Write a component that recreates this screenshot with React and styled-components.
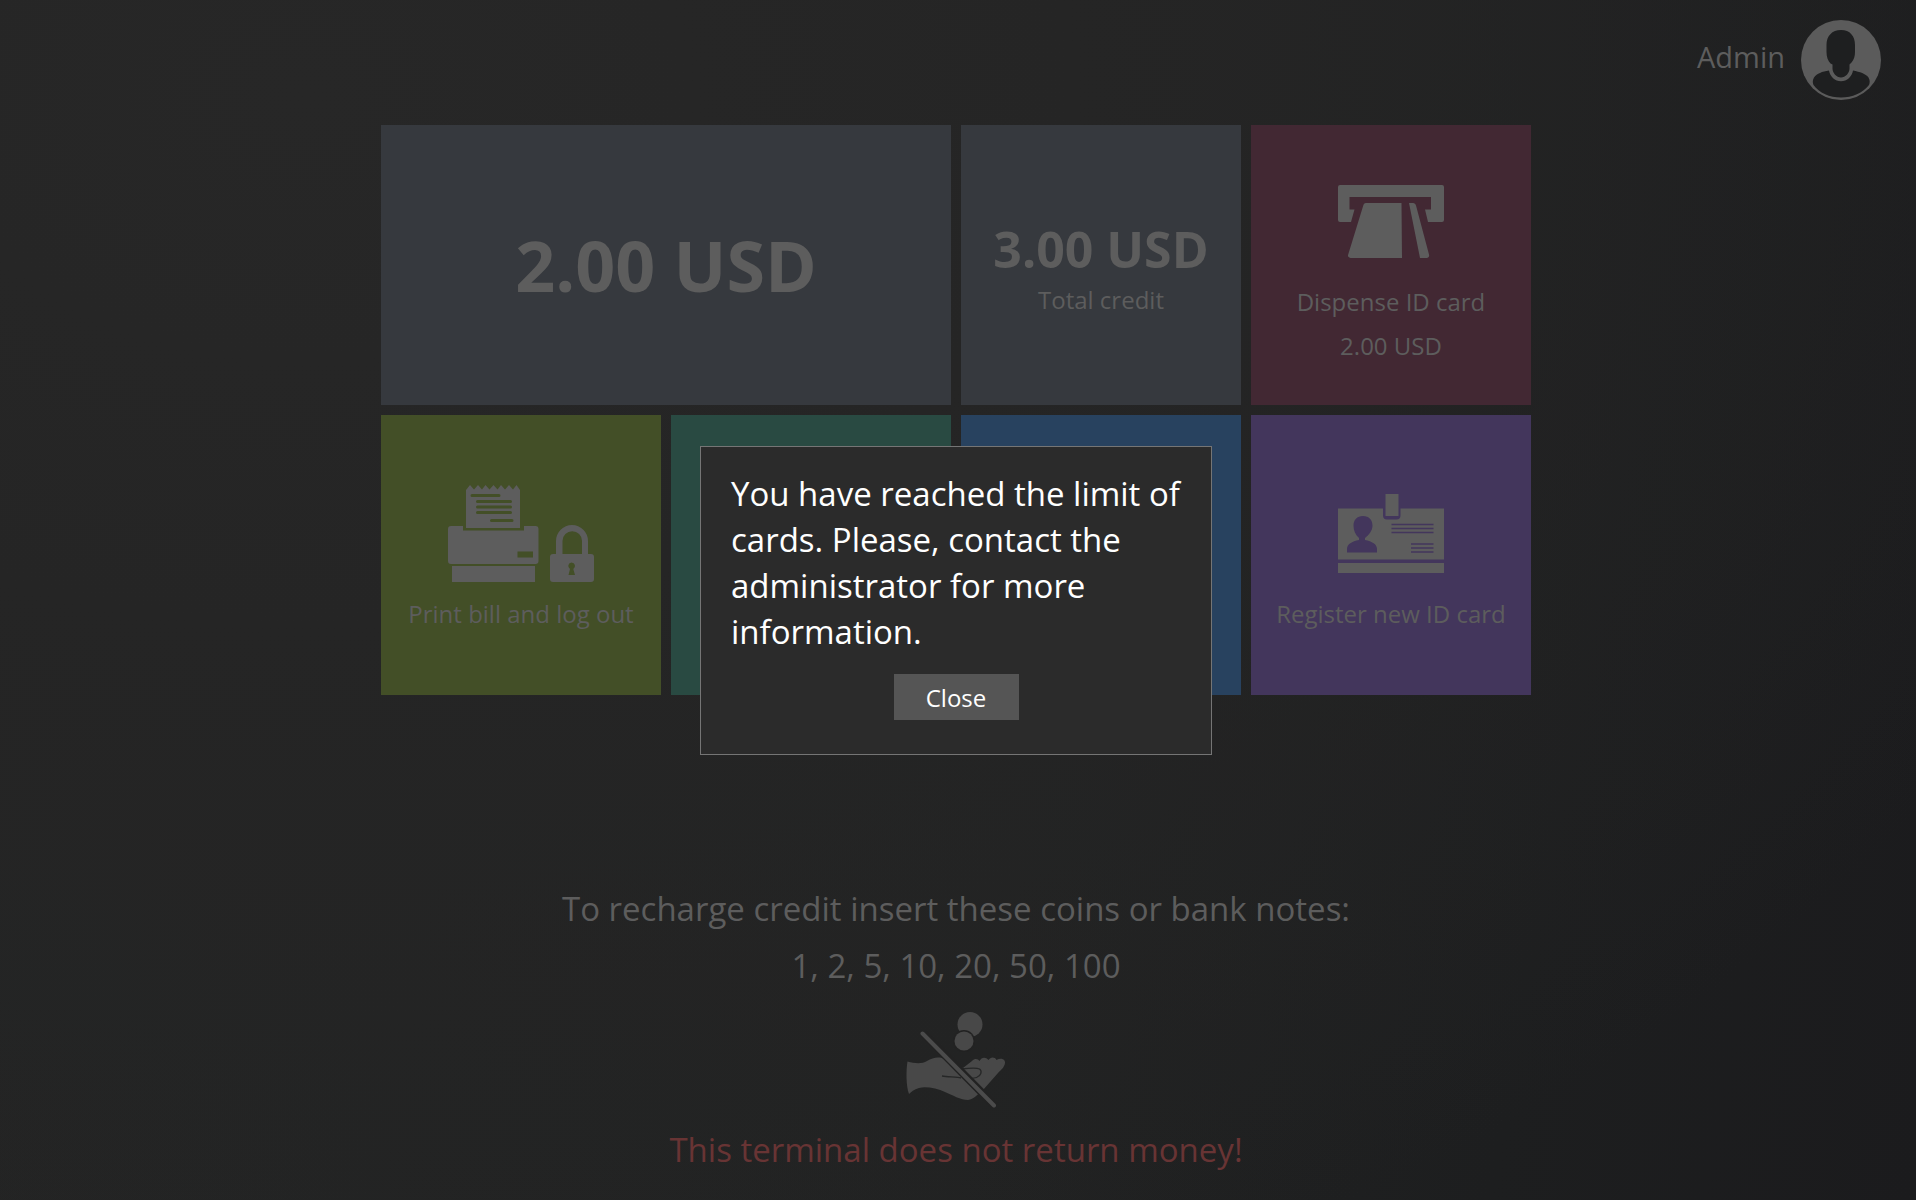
import React from "react";
import styled, { createGlobalStyle } from "styled-components";

const Global = createGlobalStyle`
  *, *::before, *::after { box-sizing: border-box; }
  html, body, #root { height: 100%; }
  body {
    margin: 0;
    background: #222222;
    color: #5d5d5d;
    font-family: "Segoe UI", "Open Sans", "Noto Sans", sans-serif;
  }
  button { font: inherit; color: inherit; border: 0; }
  h1, p { margin: 0; font-weight: 400; }
  svg { display: block; }
`;

const Page = styled.div`
  min-height: 100vh;
  padding-right: 4px;
  display: flex;
  flex-direction: column;
  align-items: center;
  background:
    radial-gradient(ellipse 100% 110% at 16% 8%, #272727 0%, #252525 40%, rgba(34, 34, 34, 0) 100%),
    linear-gradient(100deg, #232424 0%, #212222 55%, #1d1e1f 80%, #1b1b1d 100%);
`;

const Header = styled.header`
  align-self: stretch;
  display: flex;
  justify-content: flex-end;
  align-items: center;
  height: 125px;
  padding: 20px 31px 25px;
`;

const UserButton = styled.button`
  display: flex;
  align-items: center;
  gap: 16px;
  padding: 0;
  background: none;
  font-size: 29px;
  line-height: 40px;
`;

const UserName = styled.span`
  padding-bottom: 6px;
`;

const Tiles = styled.main`
  display: grid;
  grid-template-columns: repeat(4, 280px);
  grid-auto-rows: 280px;
  gap: 10px;
`;

const Tile = styled.section`
  grid-column: span ${(p) => p.$span || 1};
  display: flex;
  flex-direction: column;
  align-items: center;
  justify-content: center;
  background: ${(p) => p.$color};
`;

const TileButton = styled(Tile).attrs({ as: "button", type: "button" })`
  justify-content: flex-start;
  padding: ${(p) => p.$top || 60}px 0 0;
  font-size: 24px;
  line-height: 32px;
`;

const Label = styled.span`
  margin-top: ${(p) => p.$gap || 0}px;
  white-space: nowrap;
`;

const Amount = styled.strong`
  font-size: ${(p) => p.$size}px;
  line-height: ${(p) => p.$line}px;
  font-weight: 700;
`;

const Caption = styled.span`
  font-size: 24px;
  line-height: 32px;
`;

const Notice = styled.footer`
  display: flex;
  flex-direction: column;
  align-items: center;
  padding-top: 185px;
  font-size: 33px;
  line-height: 57px;
  text-align: center;
`;

const HandSlot = styled.div`
  padding: 18px 0 13px;
`;

const Warning = styled.p`
  color: #683434;
`;

const Overlay = styled.div`
  position: fixed;
  inset: 0;
  padding-right: 4px;
  display: flex;
  align-items: center;
  justify-content: center;
`;

const Dialog = styled.div`
  width: 512px;
  padding: 24px 30px 34px;
  display: flex;
  flex-direction: column;
  align-items: center;
  gap: 19px;
  border: 1px solid #757575;
  background: #2b2b2b;
  color: #ffffff;
`;

const Message = styled.p`
  align-self: stretch;
  font-size: 33px;
  line-height: 46px;
`;

const CloseButton = styled.button`
  width: 125px;
  height: 46px;
  padding: 2px 0 0;
  background: #555555;
  font-size: 24px;
  line-height: 32px;
`;

const Avatar = () => (
  <svg width="80" height="80" viewBox="0 0 80 80" aria-hidden="true">
    <circle cx="40" cy="40" r="40" fill="#5b5b5b" />
    <path
      fill="#1e1f20"
      d="M40 10c-9 0-14.500 6-14.500 15v7c0 5 1.500 9 4 11.500l2 1v4c0 4.500 4 9 8.500 9s8.500-4.500 8.500-9v-4l2-2c2.500-3 3.500-6.500 3.500-10.500v-7C54 16 49 10 40 10z"
    />
    <path
      fill="#1e1f20"
      d="M28 50.500c1 6 6 10.800 12 10.800s11-4.800 12-10.800c7 1.500 12.500 3 15.500 7 1.500 2.500 1.500 5 .5 7.500C62 73 51 77.500 40 77.500S18 73 12.500 65c-1-2.500-1-5 .5-7.500 3-4 8-6 15-7z"
    />
  </svg>
);

const DispenseIcon = () => (
  <svg width="106" height="74" viewBox="0 0 106 74" fill="#5d5d5d" aria-hidden="true">
    <path d="M2 0h102a2 2 0 0 1 2 2v33a2 2 0 0 1-2 2H90L87 24.500h6V12H11.500v12.500h5L13 37H2a2 2 0 0 1-2-2V2a2 2 0 0 1 2-2z" />
    <path d="M28 18h35.500l.5 55H12.500a2.500 2.500 0 0 1-2.300-3.500L25.500 19.800A2.500 2.500 0 0 1 28 18z" />
    <path d="M71 18h4c1.500 0 2.500 1 3 2.500L91 69.500c.6 2-.5 3.500-2.500 3.500H82z" />
  </svg>
);

const PrintIcon = () => (
  <svg width="146" height="97" viewBox="0 0 146 97" fill="#5d5d5d" aria-hidden="true">
    <path d="M18 43V5l4-5 4 4.500L30 0l4 4.500L37.500 0l4 4.500L45.500 0l4 4.500L53 0l4 4.500L61 0l4 4.500L68.500 0 72 5v38z" />
    <path d="M3 41h12v4.500h61V41h11.500a3 3 0 0 1 3 3v32a3 3 0 0 1-3 3H3a3 3 0 0 1-3-3V44a3 3 0 0 1 3-3z" />
    <path d="M4 81h83v16H4z" />
    <path
      stroke="#434f27"
      strokeWidth="3"
      strokeLinecap="round"
      d="M24 10.500h27M29.500 16.500h33M29.500 22h33M29.500 27.500h33M43.500 35.500h20.500"
    />
    <path fill="#434f27" d="M69.500 66.500h15.500v6H69.500z" />
    <path d="M108 69V56a16 16 0 0 1 32 0v13h3a3 3 0 0 1 3 3v22a3 3 0 0 1-3 3h-38a3 3 0 0 1-3-3V72a3 3 0 0 1 3-3zm6.500 0h19.500V56a9.700 9.700 0 0 0-19.500 0z" />
    <path fill="#434f27" d="M123.500 77.500a3.500 3.500 0 0 1 1.800 6.500l1.700 6h-6.500l1.500-6a3.500 3.500 0 0 1 1.500-6.500z" />
  </svg>
);

const RegisterIcon = () => (
  <svg width="106" height="80" viewBox="0 0 106 80" fill="#5d5d5d" aria-hidden="true">
    <path d="M0 15.500h45v7a4 4 0 0 0 4 4h9.500a4 4 0 0 0 4-4v-7H106v51H0z" />
    <path d="M47.500 1h13v22h-13zM0 70h106v10H0z" />
    <path
      fill="#43365c"
      d="M25 23c-6 0-9.500 4-9.500 9.500 0 5 2 9.500 5.500 12.500v2c-7 1.500-12 4-12 9V59.500h30V56c0-5-5-7.500-12-9v-2c4-3 7.500-7.500 7.500-12.500C34.500 27 31 23 25 23z"
    />
    <path stroke="#43365c" strokeWidth="1.500" d="M53.500 31.500h42M53.500 35.500h42M53.500 39.500h42M73 51h22.500M73 55h22.500M73 59h22.500" />
  </svg>
);

const NoReturnIcon = () => (
  <svg width="100" height="96" viewBox="0 0 100 96" aria-hidden="true">
    <circle cx="64" cy="12.500" r="12.500" fill="#484848" />
    <circle cx="58" cy="29" r="11" fill="#222222" />
    <circle cx="58" cy="29" r="9.500" fill="#484848" />
    <path
      fill="#484848"
      d="M1.500 49.500C9 51.500 16 52 21 49c6-3.500 12-4.500 17-2l19 9 9-7c3-3 6-2 7.500 0 2-4 6-4.500 9-1 2-3 6-3.500 8 0 4-2.500 9-1 8.500 3-.5 4-4 7-7 10L77 78c-6 5-9 9-15 10-7 0-16-5-23-8-8-3.500-19-6-26-4-5 1.500-8 4-10 6-3-8-3-24-1.500-32.500z"
    />
    <path fill="none" stroke="#262727" strokeWidth="1.300" d="M36 64c6 1 15 1 19 2M55 57c8-1 16-1.500 18.500 0 3 2 1.500 7-3 8.500-3 1-7 1-11 0" />
    <path stroke="#222222" strokeWidth="8" d="M18 22l71 72" />
    <path stroke="#4b4b4b" strokeWidth="4" strokeLinecap="round" d="M16.500 21.500L88 93.500" />
  </svg>
);

export default function App() {
  return (
    <>
      <Global />
      <Page>
        <Header>
          <UserButton type="button">
            <UserName>Admin</UserName>
            <Avatar />
          </UserButton>
        </Header>

        <Tiles>
          <Tile $span={2} $color="#36393e">
            <Amount $size={70} $line={92}>2.00 USD</Amount>
          </Tile>
          <Tile $color="#36393e">
            <Amount $size={50} $line={70}>3.00 USD</Amount>
            <Caption>Total credit</Caption>
          </Tile>
          <TileButton $color="#422833">
            <DispenseIcon />
            <Label $gap={27}>Dispense ID card</Label>
            <Label $gap={12}>2.00 USD</Label>
          </TileButton>
          <TileButton $color="#434f27" $top={70}>
            <PrintIcon />
            <Label $gap={16}>Print bill and log out</Label>
          </TileButton>
          <TileButton $color="#294a42" aria-label="Recharge credit" />
          <TileButton $color="#28425f" aria-label="Account details" />
          <TileButton $color="#43365c" $top={78}>
            <RegisterIcon />
            <Label $gap={25}>Register new ID card</Label>
          </TileButton>
        </Tiles>

        <Notice>
          <p>To recharge credit insert these coins or bank notes:</p>
          <p>1, 2, 5, 10, 20, 50, 100</p>
          <HandSlot>
            <NoReturnIcon />
          </HandSlot>
          <Warning>This terminal does not return money!</Warning>
        </Notice>
      </Page>

      <Overlay>
        <Dialog role="alertdialog" aria-modal="true" aria-describedby="limit-message">
          <Message id="limit-message">
            You have reached the limit of cards. Please, contact the administrator for more information.
          </Message>
          <CloseButton type="button">Close</CloseButton>
        </Dialog>
      </Overlay>
    </>
  );
}
